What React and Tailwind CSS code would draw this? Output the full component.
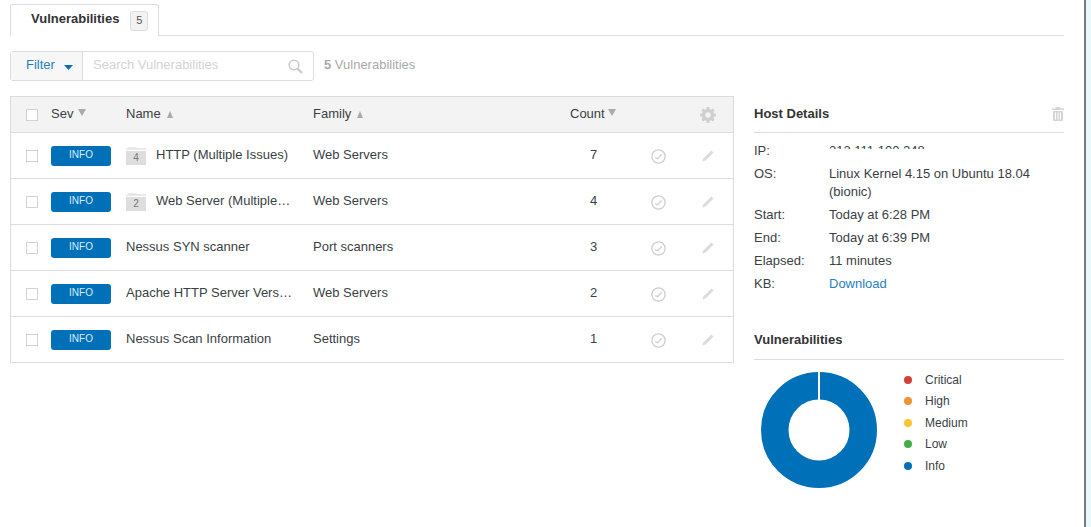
import React from 'react';

const rows = [
  { name: 'HTTP (Multiple Issues)', family: 'Web Servers', count: 7, group: 4 },
  { name: 'Web Server (Multiple Issues)', family: 'Web Servers', count: 4, group: 2 },
  { name: 'Nessus SYN scanner', family: 'Port scanners', count: 3 },
  { name: 'Apache HTTP Server Version', family: 'Web Servers', count: 2 },
  { name: 'Nessus Scan Information', family: 'Settings', count: 1 },
];

const details = [
  ['OS:', 'Linux Kernel 4.15 on Ubuntu 18.04 (bionic)'],
  ['Start:', 'Today at 6:28 PM'],
  ['End:', 'Today at 6:39 PM'],
  ['Elapsed:', '11 minutes'],
];

const legend = [
  ['Critical', 'bg-[#d43f3a]'],
  ['High', 'bg-[#ee9336]'],
  ['Medium', 'bg-[#fdc431]'],
  ['Low', 'bg-[#3fae49]'],
  ['Info', 'bg-[#0071b9]'],
];

const Checkbox = () => <span className="block h-3 w-3 border border-[#d2d2d2] bg-white" />;

// sort arrows: the up one is smaller and sits lower than the down one
const CaretDown = ({ ml = 'ml-[5px]' }) => (
  <svg width="8" height="7" viewBox="0 0 8 7" className={`${ml} -mt-[2px]`}>
    <path d="M0 0 H8 L4 7 Z" fill="#aaaaaa" />
  </svg>
);

const CaretUp = () => (
  <svg width="6" height="7" viewBox="0 0 6 7" className="ml-[6px] mt-[2px]">
    <path d="M3 0 L6 7 H0 Z" fill="#aaaaaa" />
  </svg>
);

const FolderIcon = ({ n }) => (
  <span className="relative mr-2.5 block h-[19px] w-5 shrink-0">
    <svg width="20" height="19" viewBox="0 0 20 19" className="absolute inset-0">
      <path d="M1 3 Q1 1 3 1 L9 1 Q11 1 11 2 L20 2 L20 4 L0 4 L0 3 Z" fill="#e8e8e8" />
      <rect x="0" y="5" width="20" height="14" fill="#dedede" />
    </svg>
    <span className="absolute inset-x-0 top-[6px] text-center text-[10px] leading-3 text-[#777]">{n}</span>
  </span>
);

const CheckCircle = () => (
  <svg width="15" height="15" viewBox="0 0 15 15" fill="none" stroke="#cfcfcf" strokeWidth="1.3">
    <circle cx="7.5" cy="7.5" r="6.6" />
    <path d="M4.2 8.6 L6.6 9.8 L10.8 5.4" />
  </svg>
);

const Pencil = () => (
  <svg width="12" height="12" viewBox="0 0 12 12">
    <path d="M9.4 0.4 L11.6 2.6 L3.6 10.4 L0.4 11.6 L1.5 8.2 Z" fill="#dcdcdc" />
  </svg>
);

const Gear = () => (
  <svg width="16" height="16" viewBox="0 0 24 24" fill="#d0d0d0">
    <path
      fillRule="evenodd"
      d="M10 0 h4 l.6 3.2 a9 9 0 0 1 2 .8 L19.3 2.2 l2.5 2.5 -1.8 2.7 a9 9 0 0 1 .8 2 L24 10 v4 l-3.2 .6 a9 9 0 0 1 -.8 2 l1.8 2.7 -2.5 2.5 -2.7 -1.8 a9 9 0 0 1 -2 .8 L14 24 h-4 l-.6 -3.2 a9 9 0 0 1 -2 -.8 l-2.7 1.8 -2.5 -2.5 1.8 -2.7 a9 9 0 0 1 -.8 -2 L0 14 v-4 l3.2 -.6 a9 9 0 0 1 .8 -2 L2.2 4.7 4.7 2.2 l2.7 1.8 a9 9 0 0 1 2 -.8 Z M12 8 a4 4 0 1 0 0 8 a4 4 0 1 0 0 -8 Z"
    />
  </svg>
);

const Trash = () => (
  <svg width="12" height="14" viewBox="0 0 12 14" fill="#d5d5d5">
    <path d="M4 0 h4 l.6 1.5 H12 V3 H0 V1.5 h3.4 Z" />
    <path
      fillRule="evenodd"
      d="M1 4 h10 v9 a1 1 0 0 1 -1 1 H2 a1 1 0 0 1 -1 -1 Z M3 5.5 v7 h1 v-7 Z M5.5 5.5 v7 h1 v-7 Z M8 5.5 v7 h1 v-7 Z"
    />
  </svg>
);

const Donut = () => (
  <svg width="116" height="116" viewBox="0 0 116 116" className="shrink-0">
    <circle cx="58" cy="58" r="44.25" fill="none" stroke="#0071b9" strokeWidth="27.5" />
    <rect x="57" y="0" width="2" height="28" fill="#fff" />
  </svg>
);

export default function App() {
  return (
    <div className="flex h-[527px] w-[1091px] overflow-hidden bg-[#e9f8fb] font-['Liberation_Sans',Arial,sans-serif] text-[13px] text-[#3a3f44]">
      <div className="h-full w-[1086px] shrink-0 border-r-2 border-[#77797c] bg-white pl-2.5 pr-5">
        {/* tabs */}
        <div className="flex h-9 items-end border-b border-[#dcdcdc]">
          <div className="-mb-px flex h-8 w-[149px] items-center rounded-t-[3px] border border-b-0 border-[#dcdcdc] bg-white pl-5">
            <span className="pb-[3px] font-bold text-[#333]">Vulnerabilities</span>
            <span className="ml-[11px] flex h-5 w-[18px] items-center justify-center rounded-[3px] border border-[#dcdcdc] bg-[#f3f3f3] text-[11px] text-[#555]">5</span>
          </div>
        </div>

        {/* filter bar */}
        <div className="mt-[15px] flex h-[30px] items-center">
          <div className="flex h-full w-[304px] rounded-[3px] border border-[#dcdcdc]">
            <div className="flex w-[72px] items-center border-r border-[#dcdcdc] bg-[#f7f7f7] pb-[2px] pl-[15px] text-[#2a7ec0]">
              Filter
              <svg width="9" height="5" viewBox="0 0 9 5" className="ml-[9px] mt-[4px]">
                <path d="M0 0 H9 L4.5 5 Z" fill="#0071b9" />
              </svg>
            </div>
            <div className="flex flex-1 items-center justify-between pl-2.5 pr-[10px] text-[#d3d3d3]">
              <span className="pb-[2px]">Search Vulnerabilities</span>
              <svg width="15" height="15" viewBox="0 0 15 15" fill="none" stroke="#cccccc" strokeWidth="1.6">
                <circle cx="6" cy="6" r="4.8" />
                <path d="M9.6 9.6 L14 14" strokeWidth="2.2" />
              </svg>
            </div>
          </div>
          <span className="ml-2.5 pb-[2px] text-[#a9a9a9]"><b className="font-bold">5</b> Vulnerabilities</span>
        </div>

        <div className="mt-[15px] flex items-start">
          {/* table */}
          <div className="w-[724px] shrink-0 border border-b-0 border-[#dcdcdc]">
            <div className="flex h-9 items-center border-b border-[#dcdcdc] bg-[#f3f3f3]">
              <span className="ml-[15px] w-[25px]"><Checkbox /></span>
              <span className="flex w-[75px] items-center pb-[2px]">Sev<CaretDown /></span>
              <span className="flex w-[187px] items-center pb-[2px]">Name<CaretUp /></span>
              <span className="flex w-[257px] items-center pb-[2px]">Family<CaretUp /></span>
              <span className="flex w-[80px] items-center pb-[2px]">Count<CaretDown ml="ml-[3px]" /></span>
              <span className="ml-[50px]"><Gear /></span>
            </div>
            {rows.map((r) => (
              <div key={r.name} className="flex h-[46px] items-center border-b border-[#dcdcdc]">
                <span className="ml-[15px] w-[25px]"><Checkbox /></span>
                <span className="w-[75px]">
                  <span className="flex h-5 w-[60px] items-center justify-center rounded-[3px] bg-[#0071b9] pb-[3px] text-[10px] text-[#d9ecf7]">INFO</span>
                </span>
                <span className="flex w-[187px] items-center pr-[19px]">
                  {r.group && <FolderIcon n={r.group} />}
                  <span className={r.group ? 'max-w-[137px] truncate pb-[2px]' : 'truncate pb-[2px]'}>{r.name}</span>
                </span>
                <span className="w-[257px] pb-[2px]">{r.family}</span>
                <span className="w-[80px] pb-[2px] pl-5">{r.count}</span>
                <span className="ml-[1px] mt-[1px] w-[51px]"><CheckCircle /></span>
                <span className="mt-[1px]"><Pencil /></span>
              </div>
            ))}
          </div>

          {/* side panel */}
          <div className="ml-5 flex-1">
            <div className="flex h-[37px] items-center justify-between border-b border-[#dcdcdc]">
              <span className="pb-[1px] font-bold text-[#333]">Host Details</span>
              <Trash />
            </div>
            <dl className="mt-[9px]">
              <div className="mb-[5px] flex h-[18px] leading-[18px]">
                <dt className="w-[75px] shrink-0">IP:</dt>
                <dd className="h-[7px] overflow-hidden">212.111.100.248</dd>
              </div>
              {details.map(([label, value]) => (
                <div key={label} className="mb-[5px] flex leading-[18px]">
                  <dt className="w-[75px] shrink-0">{label}</dt>
                  <dd className="flex-1">{value}</dd>
                </div>
              ))}
              <div className="flex leading-[18px]">
                <dt className="w-[75px]">KB:</dt>
                <dd className="text-[#2a7ec0]">Download</dd>
              </div>
            </dl>

            <div className="mt-[31px] flex h-9 items-center border-b border-[#dcdcdc]">
              <span className="pb-[3px] font-bold text-[#333]">Vulnerabilities</span>
            </div>
            <div className="mt-3 flex pl-[7px]">
              <Donut />
              <ul className="-mt-[3px] ml-[27px] text-xs">
                {legend.map(([label, color]) => (
                  <li key={label} className="flex h-[21.5px] items-center">
                    <span className={`h-2 w-2 rounded-full ${color}`} />
                    <span className="ml-[13px]">{label}</span>
                  </li>
                ))}
              </ul>
            </div>
          </div>
        </div>
      </div>
    </div>
  );
}
